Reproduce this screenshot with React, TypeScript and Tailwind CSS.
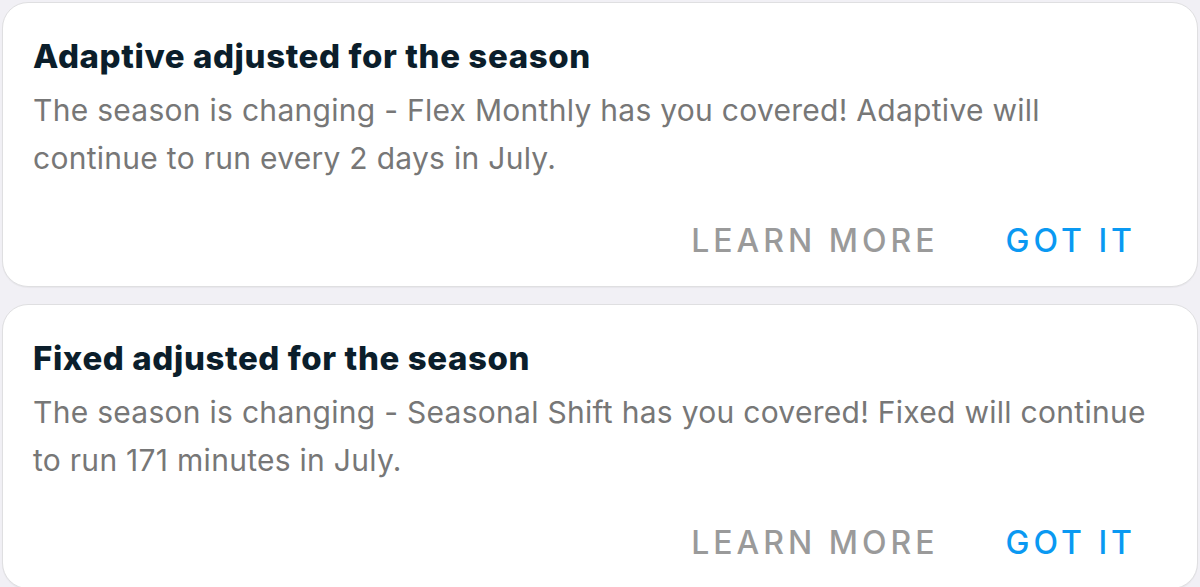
type Notice = {
  title: string
  lines: string[]
}

const notices: Notice[] = [
  {
    title: 'Adaptive adjusted for the season',
    lines: [
      'The season is changing - Flex Monthly has you covered! Adaptive will',
      'continue to run every 2 days in July.',
    ],
  },
  {
    title: 'Fixed adjusted for the season',
    lines: [
      'The season is changing - Seasonal Shift has you covered! Fixed will continue',
      'to run 171 minutes in July.',
    ],
  },
]

function SeasonCard({ notice }: { notice: Notice }) {
  return (
    <div className="shrink-0 rounded-[26px] border border-[#dfdfe1] bg-white pl-[30px] pr-[30px] pt-[33px] pb-[25px] shadow-[0_1px_1px_rgba(0,0,0,0.04)]">
      <h2 className="text-[33px] font-extrabold leading-[40px] tracking-[0.6px] text-[#0b1e2b]">
        {notice.title}
      </h2>
      <p className="mt-[10px] text-[30px] leading-[48px] tracking-[0.28px] text-[#777777] whitespace-nowrap">
        {notice.lines.map((line, i) => (
          <span key={i} className="block">
            {line}
          </span>
        ))}
      </p>
      <div className="mt-[39px] flex items-center justify-end pr-[31px]">
        <button className="text-[32px] font-medium leading-[40px] tracking-[4px] text-[#9a9a9a]">
          LEARN MORE
        </button>
        <button className="ml-[67px] text-[32px] font-medium leading-[40px] tracking-[4px] text-[#0a99f2]">
          GOT IT
        </button>
      </div>
    </div>
  )
}

export default function App() {
  return (
    <div className="flex h-[587px] w-[1200px] flex-col gap-[17px] overflow-hidden bg-[#f1f0f5] p-[2px] font-['Inter',sans-serif]">
      {notices.map((n) => (
        <SeasonCard key={n.title} notice={n} />
      ))}
    </div>
  )
}
